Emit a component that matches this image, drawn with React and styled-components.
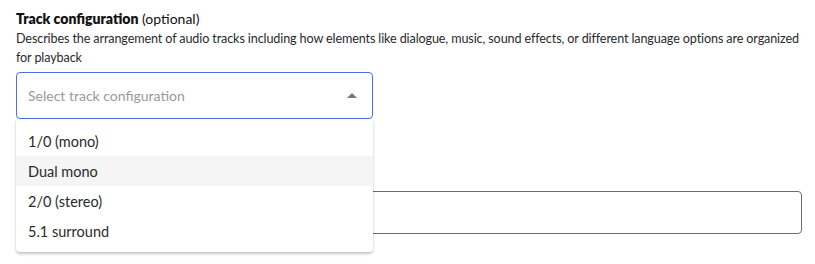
import React, { useState } from "react";
import styled, { createGlobalStyle } from "styled-components";

const GlobalStyle = createGlobalStyle`
  body {
    margin: 0;
    background: #ffffff;
    font-family: "Lato", "Noto Sans", sans-serif;
    color: #1f1f1f;
    overflow: hidden;
  }
`;

const Page = styled.div`
  display: flex;
  flex-direction: column;
  padding: 10px 13px 0 16px;
  width: 815px;
  min-height: 100vh;
  box-sizing: border-box;
`;

const Field = styled.div`
  display: flex;
  flex-direction: column;
  width: ${(p) => p.width || "100%"};
  position: relative;
`;

const Label = styled.div`
  font-size: 14px;
  line-height: 18px;
  color: #111;
  & b {
    font-weight: 800;
  }
`;

const Hint = styled.p`
  font-size: 12.6px;
  letter-spacing: -0.12px;
  line-height: 18.5px;
  color: #2a2a2a;
  white-space: nowrap;
  margin: 2px 0 5px;
`;

const SelectBox = styled.div`
  height: 47px;
  box-sizing: border-box;
  border: 1px solid #4a6cf0;
  border-radius: 4px;
  display: flex;
  align-items: center;
  justify-content: space-between;
  padding: 0 15px 0 11px;
  background: #fff;
  cursor: pointer;
`;

const Placeholder = styled.span`
  font-size: 14px;
  color: #9a9a9a;
`;

const Caret = styled.span`
  width: 0;
  height: 0;
  border-left: 5px solid transparent;
  border-right: 5px solid transparent;
  border-bottom: 5px solid #777;
`;

const Menu = styled.ul`
  position: absolute;
  top: 100%;
  left: 0;
  right: 0;
  margin: 0;
  padding: 7px 0 6px;
  list-style: none;
  background: #fff;
  border-radius: 0 0 4px 4px;
  box-shadow: 0 2px 3px rgba(0, 0, 0, 0.22), 0 0 2px rgba(0, 0, 0, 0.06);
  z-index: 2;
`;

const Option = styled.li`
  height: 30px;
  display: flex;
  align-items: center;
  padding: 0 12px;
  font-size: 14.5px;
  color: #2a2a2a;
  background: ${(p) => (p.$active ? "#f5f5f5" : "transparent")};
`;

const Spacer = styled.div`
  height: 72px;
`;

const TextInput = styled.div`
  height: 43px;
  box-sizing: border-box;
  border: 1px solid #6b6b6b;
  border-radius: 4px;
  width: 786px;
`;

const options = ["1/0 (mono)", "Dual mono", "2/0 (stereo)", "5.1 surround"];

export default function App() {
  const [hover, setHover] = useState(1);
  return (
    <>
      <GlobalStyle />
      <Page>
        <Label>
          <b>Track configuration</b> (optional)
        </Label>
        <Hint>
          Describes the arrangement of audio tracks including how elements like dialogue, music, sound effects, or
          different language options are organized
          <br />
          for playback
        </Hint>
        <Field width="357px">
          <SelectBox>
            <Placeholder>Select track configuration</Placeholder>
            <Caret />
          </SelectBox>
          <Menu>
            {options.map((o, i) => (
              <Option key={o} $active={i === hover} onMouseEnter={() => setHover(i)}>
                {o}
              </Option>
            ))}
          </Menu>
        </Field>
        <Spacer />
        <TextInput />
      </Page>
    </>
  );
}
